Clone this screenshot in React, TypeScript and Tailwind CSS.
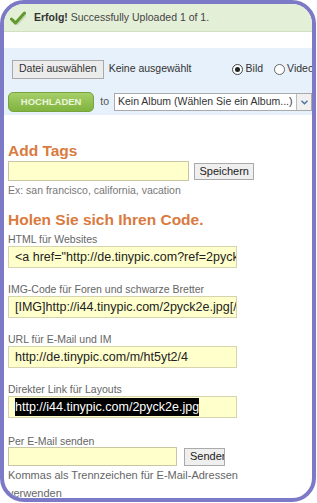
import React from "react"

const fieldInput =
  "h-[22px] w-[229px] border border-[#d6d3b0] bg-[#ffffcc] px-[6px] flex items-center text-[12.5px] text-[#222] whitespace-nowrap overflow-hidden"

function Field({ label, value, selected, first }: { label: string; value: string; selected?: boolean; first?: boolean }) {
  return (
    <div className={first ? "mt-[4px]" : "mt-[15px]"}>
      <div className="h-[12px] text-[10.5px] leading-[12px] text-[#666]">{label}</div>
      <div className={fieldInput + " mt-[1px]"}>
        {selected ? <span className="bg-black text-white">{value}</span> : <span>{value}</span>}
      </div>
    </div>
  )
}

function Check() {
  return (
    <svg width="16" height="14" viewBox="0 0 16 14">
      <path d="M1.5 8.5 L5.5 12.5 L14.5 2.5" fill="none" stroke="#c9d8b8" strokeWidth="3.5" strokeLinecap="round" strokeLinejoin="round" transform="translate(0.8 0.8)" />
      <path d="M1.5 8 L5.5 12 L14.5 2" fill="none" stroke="#5f9a2c" strokeWidth="3" strokeLinecap="round" strokeLinejoin="round" />
    </svg>
  )
}

export default function App() {
  return (
    <div className="h-[503px] w-[317px] bg-white font-['Liberation_Sans',Arial,sans-serif]">
      <div className="h-[502px] w-[316px] overflow-hidden rounded-[24px] border-4 border-[#7c79c6] bg-white">
        {/* Success bar */}
        <div className="flex h-[28px] items-center gap-[8px] border-b border-[#d3e1c3] bg-[#e4efd8] pl-[6px] text-[10.5px] text-[#444]">
          <Check />
          <span>
            <b className="text-[#333]">Erfolg!</b> Successfully Uploaded 1 of 1.
          </span>
        </div>

        {/* White strip */}
        <div className="h-[16px]" />

        {/* Upload area */}
        <div className="h-[67px] bg-[#e7f1fb] pl-[4px] text-[10.5px] text-[#333]">
          <div className="flex h-[40px] items-center whitespace-nowrap pt-[2px]">
            <div className="ml-[4px] flex h-[19px] items-center border border-[#a9a9a9] bg-[#ececec] px-[6px]">Datei auswählen</div>
            <span className="ml-[5px]">Keine ausgewählt</span>
            <span className="ml-[40px] flex items-center gap-[3px]">
              <span className="flex h-[11px] w-[11px] items-center justify-center rounded-full border border-[#444] bg-white">
                <span className="h-[5px] w-[5px] rounded-full bg-[#222]" />
              </span>
              Bild
            </span>
            <span className="ml-[11px] flex items-center gap-[2px]">
              <span className="h-[11px] w-[11px] rounded-full border border-[#666] bg-white" />
              Video
            </span>
          </div>
          <div className="mt-[4px] flex items-center whitespace-nowrap">
            <div className="flex h-[20px] w-[89px] items-center justify-center rounded-[5px] border border-[#78a43b] bg-gradient-to-b from-[#a6cf68] to-[#80b33f] text-[9.5px] font-bold text-[#eaf6da]">
              HOCHLADEN
            </div>
            <span className="ml-[6px] text-[#555]">to</span>
            <div className="ml-[5px] flex h-[18px] items-center border border-[#aaa] bg-white pl-[3px]">
              <span className="w-[178px] overflow-hidden">Kein Album (Wählen Sie ein Album...)</span>
              <span className="flex h-[16px] w-[15px] items-center justify-center border-l border-[#bbb] bg-[#f0f0f0]">
                <svg width="7" height="5" viewBox="0 0 7 5">
                  <path d="M0.5 0.8 L3.5 3.8 L6.5 0.8" fill="none" stroke="#4a6fa0" strokeWidth="1.4" />
                </svg>
              </span>
            </div>
          </div>
        </div>

        {/* Form */}
        <div className="w-[250px] pl-[4px] pt-[27px]">
          <div className="text-[15.5px] font-bold leading-[18px] text-[#d97a3e]">Add Tags</div>
          <div className="mt-[1px] flex items-center">
            <div className="h-[20px] w-[228px] border border-[#c9c6a4] bg-[#ffffcc]" />
            <div className="ml-[5px] flex h-[17px] items-center border border-[#aaa] bg-[#efefef] px-[4px] text-[11px] text-[#222]">
              Speichern
            </div>
          </div>
          <div className="mt-[3px] text-[10.5px] leading-[12px] text-[#777]">Ex: san francisco, california, vacation</div>

          <div className="mt-[15px] text-[15.5px] font-bold leading-[18px] text-[#d97a3e]">Holen Sie sich Ihren Code.</div>
          <Field first label="HTML für Websites" value={'<a href="http://de.tinypic.com?ref=2pyck2e" target="_blank">'} />
          <Field label="IMG-Code für Foren und schwarze Bretter" value="[IMG]http://i44.tinypic.com/2pyck2e.jpg[/IMG]" />
          <Field label="URL für E-Mail und IM" value="http://de.tinypic.com/m/ht5yt2/4" />
          <Field label="Direkter Link für Layouts" value="http://i44.tinypic.com/2pyck2e.jpg" selected />

          <div className="mt-[17px] h-[12px] text-[10.5px] leading-[12px] text-[#666]">Per E-Mail senden</div>
          <div className="flex items-center">
            <div className="h-[19px] w-[169px] border border-[#c9c6a4] bg-[#ffffcc]" />
            <div className="ml-[7px] flex h-[18px] w-[41px] items-center overflow-hidden whitespace-nowrap border border-[#aaa] bg-[#efefef] pl-[5px] text-[11px] text-[#222]">
              Senden
            </div>
          </div>
          <div className="w-[245px] text-[11px] leading-[18px] text-[#666]">
            Kommas als Trennzeichen für E-Mail-Adressen verwenden
          </div>
        </div>
      </div>
    </div>
  )
}
